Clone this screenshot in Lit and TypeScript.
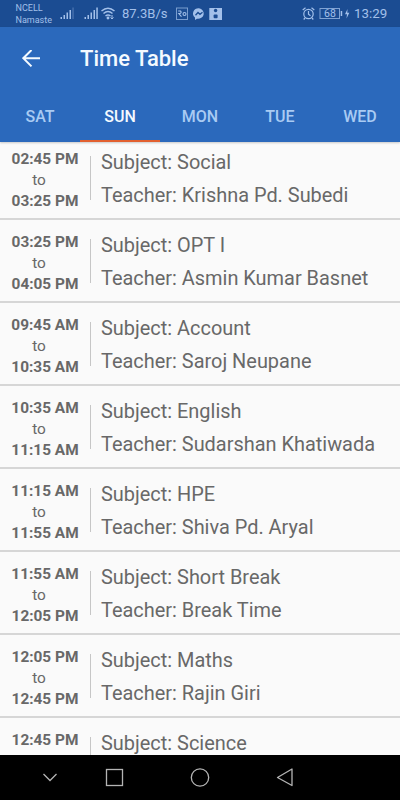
import { LitElement, html, css, nothing } from "lit";
import { customElement, property } from "lit/decorators.js";

interface Lesson {
  from: string;
  to?: string;
  subject: string;
  teacher?: string;
}

const lessons: Lesson[] = [
  { from: "02:45 PM", to: "03:25 PM", subject: "Social", teacher: "Krishna Pd. Subedi" },
  { from: "03:25 PM", to: "04:05 PM", subject: "OPT I", teacher: "Asmin Kumar Basnet" },
  { from: "09:45 AM", to: "10:35 AM", subject: "Account", teacher: "Saroj Neupane" },
  { from: "10:35 AM", to: "11:15 AM", subject: "English", teacher: "Sudarshan Khatiwada" },
  { from: "11:15 AM", to: "11:55 AM", subject: "HPE", teacher: "Shiva Pd. Aryal" },
  { from: "11:55 AM", to: "12:05 PM", subject: "Short Break", teacher: "Break Time" },
  { from: "12:05 PM", to: "12:45 PM", subject: "Maths", teacher: "Rajin Giri" },
  { from: "12:45 PM", subject: "Science" },
];

@customElement("status-bar")
class StatusBar extends LitElement {
  static styles = css`
    :host {
      display: flex;
      height: 27px;
      background: #1b4c92;
      color: #a3c0ea;
      font-size: 12.5px;
    }
    svg { display: block; flex: none; }
    .carrier { width: 44.5px; padding: 2px 0 0 15.5px; font-size: 9px; line-height: 12px; flex: none; }
    .signal { margin-top: 7px; }
    .second { margin-left: 10px; }
    .wifi { margin: 7px 0 0 3px; }
    .speed { margin-left: 7px; width: 52px; line-height: 28px; font-size: 13px; white-space: nowrap; }
    .apps { margin: 7px 0 0 0; }
    .space { flex: 1; }
    .alarm { margin-top: 7px; }
    .battery { margin: 7px 0 0 4px; }
    .pct { font-size: 10.5px; fill: #a3c0ea; }
    .clock { width: 46px; margin-left: 3px; line-height: 28px; font-size: 13.3px; }
  `;

  private signal(cls: string, full: boolean) {
    return html`<svg class="signal ${cls}" width="14" height="13" viewBox="0 0 14 13" fill="#a3c0ea">
      <path d="M.5 10H2v2H.5zM3.500 8H5v4H3.500zM6.500 5.500H8V12H6.500zM9.500 3H11v9H9.500z" />
      <path d="M12.300 .5h1.500V12h-1.500z" opacity=${full ? 1 : 0.3} />
    </svg>`;
  }

  render() {
    return html`
      <div class="carrier">NCELL<br />Namaste</div>
      ${this.signal("", false)}${this.signal("second", true)}
      <svg class="wifi" width="14" height="13" viewBox="0 0 14 13" fill="none" stroke="#a3c0ea" stroke-width="1.500">
        <path d="M.5 4Q7-1.500 13.500 4M2.500 6.500Q7 2.500 11.500 6.500M4.500 9Q7 7 9.500 9" />
        <circle cx="7" cy="11" r=".7" fill="#a3c0ea" />
        <path d="M11 8v4M9.500 10.500L11 12l1.500-1.500" stroke-width="1" />
      </svg>
      <div class="speed">87.3B/s</div>
      <svg class="apps" width="50" height="14" viewBox="0 0 50 14" fill="none" stroke="#a3c0ea">
        <rect x="2.500" y="1" width="11" height="11.500" opacity=".7" />
        <path d="M4.200 4h2.300q1.500 1.300-.5 2.500H4.800L7.500 9.700" stroke-width="1.100" />
        <circle cx="10.500" cy="7" r="1.500" stroke-width="1.100" />
        <path d="M25 1.200a5.700 5.300 0 0 0-4 9.300v2.500l2-1.300A5.700 5.300 0 1 0 25 1.200z" fill="#a3c0ea" stroke="none" />
        <path d="M21.500 8.300l2.500-2.800 2 1.800 2.500-2" stroke="#1b4c92" stroke-width="1.300" />
        <path d="M35.300 1h12.700v12H35.300z" fill="#a3c0ea" stroke="none" />
        <circle cx="41.600" cy="3.500" r="1.700" fill="#1b4c92" stroke="none" />
        <rect x="39.600" y="7.500" width="4" height="3.700" rx="1" fill="#1b4c92" stroke="none" />
      </svg>
      <div class="space"></div>
      <svg class="alarm" width="13" height="13" viewBox="0 0 13 13" fill="none" stroke="#a3c0ea" stroke-width="1.200">
        <circle cx="6.500" cy="7" r="4.700" />
        <path d="M6.500 4v3.200l2 1.500M.7 3L3.500.8M12.300 3L9.500.8M3 11l-1.300 1.500M10 11l1.300 1.500" />
      </svg>
      <svg class="battery" width="32" height="14" viewBox="0 0 32 14">
        <rect x="1" y="1.500" width="19.500" height="10" fill="none" stroke="#a3c0ea" opacity=".75" />
        <path d="M21.700 4h1.500v5h-1.500z" fill="#a3c0ea" />
        <text class="pct" x="5" y="10.400">68</text>
        <path d="M28.500 2L26 7.300h2L27.500 11.500l2.800-5.700h-2z" fill="#a3c0ea" />
      </svg>
      <div class="clock">13:29</div>
    `;
  }
}

@customElement("lesson-row")
class LessonRow extends LitElement {
  @property({ attribute: false }) lesson!: Lesson;

  static styles = css`
    :host {
      display: flex;
      box-sizing: border-box;
      height: 83px;
      border-bottom: 2px solid #d6d6d6;
      color: #686868;
      flex: none;
    }
    .time {
      width: 90px;
      padding-top: 12px;
      box-sizing: border-box;
      text-align: center;
      font-size: 15.4px;
      line-height: 21px;
    }
    .hour { font-weight: 700; }
    .to { padding-right: 12px; }
    .rule { width: 1px; height: 44px; margin-top: 19px; background: #c6c6c6; }
    .info { padding: 9px 0 0 10px; font-size: 19.93px; line-height: 33px; white-space: nowrap; }
  `;

  render() {
    const l = this.lesson;
    return html`
      <div class="time">
        <div class="hour">${l.from}</div>
        ${l.to ? html`<div class="to">to</div><div class="hour">${l.to}</div>` : nothing}
      </div>
      <div class="rule"></div>
      <div class="info">
        <div>Subject: ${l.subject}</div>
        ${l.teacher ? html`<div>Teacher: ${l.teacher}</div>` : nothing}
      </div>
    `;
  }
}

@customElement("app-root")
class AppRoot extends LitElement {
  static styles = css`
    :host {
      display: flex;
      flex-direction: column;
      width: 400px;
      height: 800px;
      overflow: hidden;
      background: #fafafa;
      font-family: Roboto, sans-serif;
    }
    header { background: #2b69bc; height: 115px; flex: none; box-shadow: 0 1px 2px rgba(0, 0, 0, 0.2); z-index: 1; }
    .bar { display: flex; align-items: center; height: 63px; }
    .back { margin-left: 22px; width: 18px; height: 18px; }
    h1 { margin: 0 0 0 40px; color: #f4faff; font-size: 22px; font-weight: 500; }
    nav { display: flex; height: 52px; }
    .tab {
      width: 80px;
      box-sizing: border-box;
      text-align: center;
      line-height: 53px;
      font-size: 16px;
      font-weight: 500;
      color: #a9cbf3;
      border-bottom: 2px solid transparent;
    }
    .active { color: #f4faff; border-color: #e2602f; }
    main { flex: 1; min-height: 0; overflow: hidden; display: flex; flex-direction: column; }
    .list { margin-top: -4.6px; display: flex; flex-direction: column; }
    footer { height: 45px; background: #000; flex: none; }
    footer svg { display: block; }
  `;

  render() {
    return html`
      <status-bar></status-bar>
      <header>
        <div class="bar">
          <svg class="back" viewBox="0 0 18 18" fill="none" stroke="#f4faff" stroke-width="2">
            <path d="M18 8.200H1.500M9.500 0L1.300 8.200l8.200 8.200" />
          </svg>
          <h1>Time Table</h1>
        </div>
        <nav>
          ${["SAT", "SUN", "MON", "TUE", "WED"].map(
            (d) => html`<div class="tab ${d === "SUN" ? "active" : ""}">${d}</div>`
          )}
        </nav>
      </header>
      <main>
        <div class="list">${lessons.map((l) => html`<lesson-row .lesson=${l}></lesson-row>`)}</div>
      </main>
      <footer>
        <svg width="400" height="45" viewBox="0 0 400 45" fill="none" stroke="#b4b4b4" stroke-width="1.300">
          <path d="M43.500 19l6.500 6.500 6.500-6.500" />
          <rect x="106.500" y="14.500" width="16" height="16" />
          <circle cx="200" cy="22.500" r="8.700" />
          <path d="M277.500 22.500L292 14v16.500z" stroke-linejoin="round" />
        </svg>
      </footer>
    `;
  }
}
